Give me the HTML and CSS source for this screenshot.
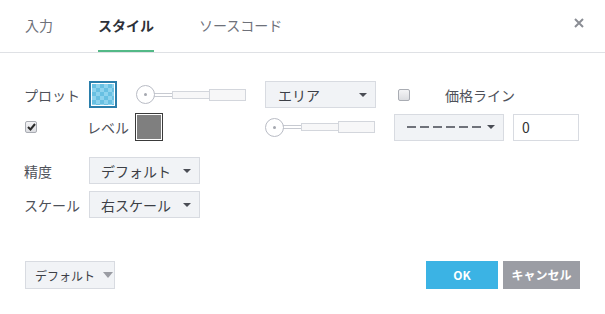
FILE: index.html
```html
<!DOCTYPE html>
<html lang="ja">
<head>
    <meta charset="UTF-8">
    <title>スタイル</title>
    <link rel="stylesheet" href="styles.css">
</head>
<body>
    <div class="dialog">
        <div class="tabs">
            <div class="tab">入力</div>
            <div class="tab active">スタイル</div>
            <div class="tab">ソースコード</div>
            <div class="close">
                <svg width="10" height="10" viewBox="0 0 10 10"><path d="M1 1 L9 9 M9 1 L1 9" stroke="#8a8d94" stroke-width="2"/></svg>
            </div>
        </div>

        <div class="content">
            <div class="row row-plot">
                <span class="label plot-label">プロット</span>
                <span class="swatch swatch-blue"><span class="fill"></span></span>
                <div class="slider slider-1">
                    <span class="knob"></span><span class="tube"></span><span class="bar-narrow"></span><span class="bar-wide"></span>
                </div>
                <div class="select select-area"><span>エリア</span><i class="caret"></i></div>
                <span class="check"></span>
                <span class="label price-label">価格ライン</span>
            </div>

            <div class="row row-level">
                <span class="check checked">
                    <svg width="9" height="8" viewBox="0 0 9 8"><path d="M1 4 L3.5 6.5 L8 1" stroke="#2b2b2b" stroke-width="2" fill="none"/></svg>
                </span>
                <span class="label level-label">レベル</span>
                <span class="swatch swatch-gray"><span class="fill"></span></span>
                <div class="slider slider-2">
                    <span class="knob"></span><span class="tube"></span><span class="bar-narrow"></span><span class="bar-wide"></span>
                </div>
                <div class="select select-dash"><span class="dashes"></span><i class="caret"></i></div>
                <div class="num-input">0</div>
            </div>

            <div class="row row-precision">
                <span class="label side-label">精度</span>
                <div class="select select-small"><span>デフォルト</span><i class="caret"></i></div>
            </div>

            <div class="row row-scale">
                <span class="label side-label">スケール</span>
                <div class="select select-small"><span>右スケール</span><i class="caret"></i></div>
            </div>
        </div>

        <div class="footer">
            <div class="btn-default"><span>デフォルト</span><i class="caret big"></i></div>
            <div class="actions">
                <div class="btn btn-ok">OK</div>
                <div class="btn btn-cancel">キャンセル</div>
            </div>
        </div>
    </div>
</body>
</html>
```

FILE: styles.css
```css
body {
    margin: 0;
    background: #fff;
    font-family: "Noto Sans CJK JP", "Noto Sans", sans-serif;
    color: #4e5159;
    font-size: 14px;
}

.dialog {
    width: 605px;
    height: 314px;
}

/* header tabs */
.tabs {
    display: flex;
    gap: 45px;
    height: 52px;
    padding-left: 25px;
    border-bottom: 1px solid #dfe1e5;
    box-sizing: content-box;
}

.tab {
    height: 50px;
    line-height: 50px;
    color: #6e717a;
    font-size: 14px;
    border-bottom: 2px solid transparent;
}

.tab.active {
    color: #2e3139;
    font-weight: bold;
    border-bottom-color: #53b987;
}

.close {
    margin-left: auto;
    margin-right: 21px;
    padding-top: 18px;
}

.close svg {
    display: block;
}

/* content rows */
.content {
    padding: 28px 0 0 24px;
}

.row {
    display: flex;
    align-items: center;
}

.row-plot { height: 27px; }
.row-level { height: 28px; margin-top: 5px; }
.row-precision { height: 27px; margin-top: 16px; }
.row-scale { height: 27px; margin-top: 7px; }

.label {
    white-space: nowrap;
    line-height: 20px;
}

.plot-label { width: 65px; }
.price-label { margin-left: 35px; }
.level-label { margin-left: 50px; width: 48px; }
.side-label { width: 65px; }

.swatch {
    box-sizing: border-box;
    display: inline-block;
    flex: none;
    padding: 1px;
    background: #fff;
}

.swatch .fill {
    display: block;
    width: 100%;
    height: 100%;
}

.swatch-blue {
    width: 28px;
    height: 27px;
    border: 2px solid #2a7eab;
}

.swatch-blue .fill {
    background-color: #68c0e2;
    background-image:
        linear-gradient(45deg, #8dd3ee 25%, transparent 25%, transparent 75%, #8dd3ee 75%),
        linear-gradient(45deg, #8dd3ee 25%, transparent 25%, transparent 75%, #8dd3ee 75%);
    background-size: 8px 8px;
    background-position: 0 0, 4px 4px;
}

.swatch-gray {
    width: 28px;
    height: 28px;
    border: 1px solid #3a3a3a;
}

.swatch-gray .fill {
    background: #7f7f7f;
}

/* slider */
.slider {
    display: flex;
    align-items: center;
    width: 111px;
    flex: none;
}

.slider-1 { margin-left: 19px; }
.slider-2 { margin-left: 102px; }

.knob {
    position: relative;
    box-sizing: border-box;
    width: 19px;
    height: 19px;
    border: 1px solid #b9bcc5;
    border-radius: 50%;
    background: #fff;
    flex: none;
}

.knob::after {
    content: "";
    position: absolute;
    left: 7px;
    top: 7px;
    width: 3px;
    height: 3px;
    border-radius: 50%;
    background: #a5a8b0;
}

.tube {
    width: 18px;
    height: 4px;
    box-sizing: border-box;
    border-top: 1px solid #c7cad1;
    border-bottom: 1px solid #c7cad1;
    background: #fff;
    margin-left: -1px;
}

.bar-narrow {
    box-sizing: border-box;
    width: 37px;
    height: 8px;
    border: 1px solid #d3d6dc;
    border-right: none;
    background: #f7f7f8;
}

.bar-wide {
    box-sizing: border-box;
    width: 37px;
    height: 12px;
    border: 1px solid #d3d6dc;
    background: #f7f7f8;
}

/* selects */
.select {
    box-sizing: border-box;
    display: flex;
    align-items: center;
    flex: none;
    height: 27px;
    padding: 0 8px 0 12px;
    background: #f1f3f6;
    border: 1px solid #d8dbe1;
    color: #3c3f46;
}

.select span {
    flex: 1;
}

.select-area {
    width: 111px;
    margin-left: 18px;
}

.select-dash {
    width: 110px;
    margin-left: 18px;
}

.select-small {
    width: 111px;
    padding-left: 11px;
}

.caret {
    width: 0;
    height: 0;
    border-left: 4px solid transparent;
    border-right: 4px solid transparent;
    border-top: 4px solid #4a4d55;
}

.caret.big {
    border-left-width: 5px;
    border-right-width: 5px;
    border-top: 6px solid #9a9ca3;
}

.select .dashes {
    flex: none;
    width: 74px;
    height: 2px;
    margin-right: auto;
    background: repeating-linear-gradient(90deg, #6f727a 0 9px, transparent 9px 13px);
}

.num-input {
    box-sizing: border-box;
    width: 66px;
    height: 27px;
    margin-left: 9px;
    padding-left: 8px;
    border: 1px solid #d8dbe1;
    background: #fff;
    color: #333;
    line-height: 25px;
}

/* checkboxes */
.check {
    box-sizing: border-box;
    display: inline-flex;
    align-items: center;
    justify-content: center;
    flex: none;
    width: 12px;
    height: 12px;
    border: 1px solid #a9acb3;
    border-radius: 2px;
    background: linear-gradient(#f4f4f6, #dcdde1);
    margin-left: 22px;
}

.check.checked {
    margin-left: 1px;
}

/* footer */
.footer {
    display: flex;
    align-items: center;
    justify-content: space-between;
    margin-top: 43px;
    padding: 0 25px 0 25px;
}

.btn-default {
    box-sizing: border-box;
    display: flex;
    align-items: center;
    gap: 8px;
    width: 90px;
    height: 28px;
    padding-left: 9px;
    background: #f1f3f6;
    border: 1px solid #d8dbe1;
    font-size: 12px;
    color: #3c3f46;
}

.actions {
    display: flex;
    gap: 5px;
}

.btn {
    height: 28px;
    line-height: 28px;
    text-align: center;
    color: #fff;
    font-size: 12px;
    font-weight: bold;
}

.btn-ok {
    width: 72px;
    background: #3bb3e4;
}

.btn-cancel {
    width: 77px;
    background: #9b9da4;
}
```
